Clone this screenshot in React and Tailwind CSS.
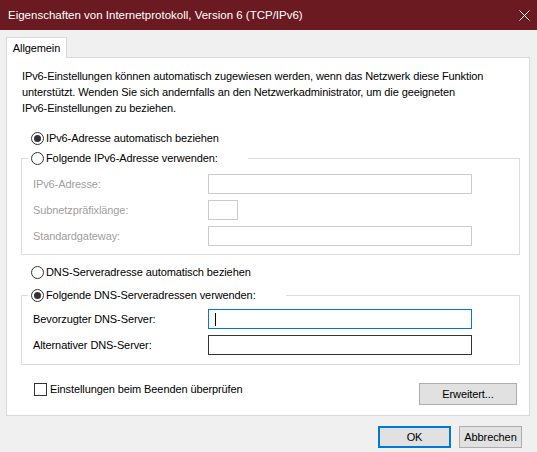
function Radio({ checked, label, disabled }) {
  return (
    <div className="flex items-center h-[16px] whitespace-nowrap">
      <span className="w-[13px] h-[13px] rounded-full border border-[#333333] bg-white flex items-center justify-center shrink-0">
        {checked && <span className="w-[7px] h-[7px] rounded-full bg-[#333333]" />}
      </span>
      <span className={`ml-[2px] ${disabled ? "text-[#a0a0a0]" : "text-black"}`}>{label}</span>
    </div>
  );
}

function Field({ label, disabled, focused, small }) {
  const border = disabled ? "border-[#cccccc]" : focused ? "border-[#0078d7]" : "border-[#333333]";
  return (
    <div className="flex items-center h-[20px]">
      <span className={`w-[175px] ${disabled ? "text-[#a0a0a0]" : "text-black"}`}>{label}</span>
      <div className={`h-[20px] ${small ? "w-[30px]" : "w-[264px]"} border ${border} bg-white flex items-center`}>
        {focused && <span className="ml-[6px] w-px h-[13px] bg-black" />}
      </div>
    </div>
  );
}

function Button({ children, width, primary }) {
  return (
    <button
      className={`h-[22px] ${width} bg-[#e1e1e1] text-black flex items-center justify-center ${primary ? "border-2 border-[#0078d7]" : "border border-[#adadad]"}`}
    >
      {children}
    </button>
  );
}

export default function App() {
  return (
    <div className="w-[537px] h-[452px] bg-[#f0f0f0] flex flex-col text-[11px] leading-[16px] tracking-[-0.1px] font-['Liberation_Sans',Arial,sans-serif] overflow-hidden">
      <div className="h-[30px] bg-[#6b1a21] text-white text-[11.5px] tracking-normal flex items-center justify-between pl-[8px] pr-[7px] shrink-0">
        <span className="whitespace-nowrap">Eigenschaften von Internetprotokoll, Version 6 (TCP/IPv6)</span>
        <svg width="11" height="11" viewBox="0 0 11 11">
          <path d="M0.5 0.5 L10.5 10.5 M10.5 0.5 L0.5 10.5" stroke="white" strokeWidth="1" />
        </svg>
      </div>

      <div className="pl-[6px] pt-[7px]">
        <div className="w-[61px] h-[21px] bg-white border border-b-0 border-[#d9d9d9] flex items-center justify-center relative z-10 -mb-px">
          Allgemein
        </div>
      </div>

      <div className="ml-[6px] w-[524px] h-[359px] bg-white border border-[#d9d9d9] px-[14px] pt-[10px] flex flex-col shrink-0">
        <p className="pl-[1px] whitespace-nowrap text-black">
          IPv6-Einstellungen können automatisch zugewiesen werden, wenn das Netzwerk diese Funktion
          <br />
          unterstützt. Wenden Sie sich andernfalls an den Netzwerkadministrator, um die geeigneten
          <br />
          IPv6-Einstellungen zu beziehen.
        </p>

        <div className="mt-[14px] ml-[10px]">
          <Radio checked label="IPv6-Adresse automatisch beziehen" />
        </div>

        <fieldset className="mt-[4px] w-[499px] border border-[#dcdcdc] pb-[8px]">
          <legend className="ml-[6px] pl-[3px] pr-[30px] bg-white">
            <Radio label="Folgende IPv6-Adresse verwenden:" />
          </legend>
          <div className="pl-[11px] pt-[8px] flex flex-col gap-[6px]">
            <Field label="IPv6-Adresse:" disabled />
            <Field label="Subnetzpräfixlänge:" disabled small />
            <Field label="Standardgateway:" disabled />
          </div>
        </fieldset>

        <div className="mt-[9px] ml-[10px]">
          <Radio label="DNS-Serveradresse automatisch beziehen" />
        </div>

        <fieldset className="mt-[7px] w-[499px] border border-[#dcdcdc] pb-[9px]">
          <legend className="ml-[6px] pl-[3px] pr-[30px] bg-white">
            <Radio checked label="Folgende DNS-Serveradressen verwenden:" />
          </legend>
          <div className="pl-[11px] pt-[6px] flex flex-col gap-[6px]">
            <Field label="Bevorzugter DNS-Server:" focused />
            <Field label="Alternativer DNS-Server:" />
          </div>
        </fieldset>

        <div className="mt-[16px] flex items-start justify-between">
          <label className="ml-[13px] flex items-center h-[16px] whitespace-nowrap">
            <span className="w-[13px] h-[13px] border border-[#333333] bg-white shrink-0" />
            <span className="ml-[3px]">Einstellungen beim Beenden überprüfen</span>
          </label>
          <div className="mt-[2px] mr-[-2px]">
            <Button width="w-[98px]">Erweitert...</Button>
          </div>
        </div>
      </div>

      <div className="mt-[10px] flex justify-end gap-[8px] pr-[15px]">
        <Button width="w-[73px]" primary>OK</Button>
        <Button width="w-[63px]">Abbrechen</Button>
      </div>
    </div>
  );
}
